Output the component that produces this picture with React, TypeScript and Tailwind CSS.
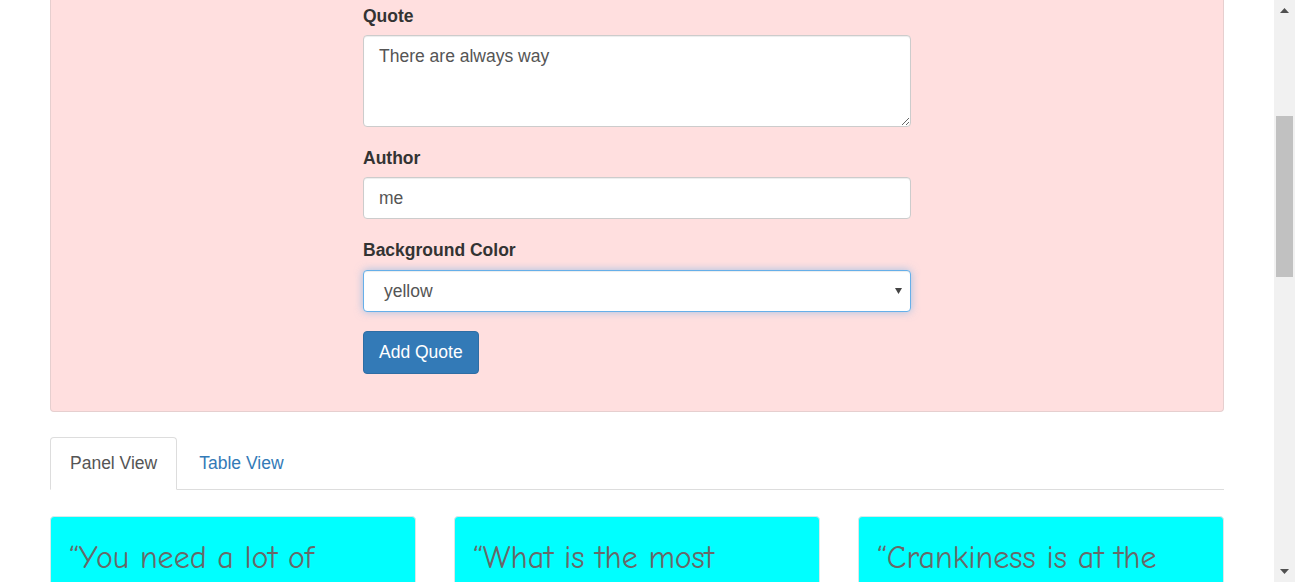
import { useState } from "react";

const quotes = [
  "“You need a lot of",
  "“What is the most",
  "“Crankiness is at the",
];

function Scrollbar() {
  return (
    <div className="flex h-full w-[21px] shrink-0 flex-col items-center bg-[#f1f1f1]">
      <div className="flex h-[21px] w-full items-center justify-center">
        <svg width="9" height="5" viewBox="0 0 9 5">
          <path d="M0 5 L4.5 0 L9 5 Z" fill="#505050" />
        </svg>
      </div>
      <div className="mt-[95px] h-[161px] w-[17px] bg-[#c1c1c1]" />
      <div className="flex-1" />
      <div className="flex h-[21px] w-full items-center justify-center">
        <svg width="9" height="5" viewBox="0 0 9 5">
          <path d="M0 0 L9 0 L4.5 5 Z" fill="#505050" />
        </svg>
      </div>
    </div>
  );
}

export default function App() {
  const [tab, setTab] = useState("panel");

  return (
    <div className="flex h-[582px] w-full overflow-hidden bg-white font-['Liberation_Sans',Arial,sans-serif] text-[17.5px]">
      <div className="min-w-0 flex-1 px-[50px]">
        {/* add quote form */}
        <div className="flex justify-center rounded-b-[4px] border-x border-b border-[#e6cfcf] bg-[#ffdfdf] pb-[37px] pt-[3px]">
          <form className="w-[548px]" onSubmit={(e) => e.preventDefault()}>
            <div className="mb-[18px]">
              <label className="mb-[6px] block leading-[26px] font-bold text-[#333]">Quote</label>
              <textarea
                defaultValue="There are always way"
                className="block h-[92px] w-full rounded-[4px] border border-[#ccc] bg-white px-[15px] py-[8px] leading-[25px] text-[#555] shadow-[inset_0_1px_1px_rgba(0,0,0,0.075)] outline-none"
              />
            </div>
            <div className="mb-[18px]">
              <label className="mb-[6px] block leading-[26px] font-bold text-[#333]">Author</label>
              <input
                defaultValue="me"
                className="block h-[42px] w-full rounded-[4px] border border-[#ccc] bg-white px-[15px] text-[#555] shadow-[inset_0_1px_1px_rgba(0,0,0,0.075)] outline-none"
              />
            </div>
            <div className="mb-[19px]">
              <label className="mb-[7px] block leading-[26px] font-bold text-[#333]">Background Color</label>
              <div className="flex h-[42px] w-full items-center justify-between rounded-[4px] border border-[#66afe9] bg-white pl-[20px] pr-[8px] text-[#555] shadow-[inset_0_1px_1px_rgba(0,0,0,0.075),0_0_8px_rgba(102,175,233,0.6)]">
                <span>yellow</span>
                <svg width="7" height="6" viewBox="0 0 7 6">
                  <path d="M0 0 L7 0 L3.5 6 Z" fill="#444" />
                </svg>
              </div>
            </div>
            <button
              type="submit"
              className="h-[43px] rounded-[4px] border border-[#2e6da4] bg-[#337ab7] px-[15px] text-white"
            >
              Add Quote
            </button>
          </form>
        </div>

        {/* tabs */}
        <ul className="mt-[25px] flex border-b border-[#ddd]">
          <li className="-mb-px">
            <button
              onClick={() => setTab("panel")}
              className={
                tab === "panel"
                  ? "h-[53px] rounded-t-[4px] border border-[#ddd] border-b-white bg-white px-[19px] text-[#555]"
                  : "h-[53px] rounded-t-[4px] border border-transparent px-[19px] text-[#337ab7]"
              }
            >
              Panel View
            </button>
          </li>
          <li className="-mb-px ml-[2px]">
            <button
              onClick={() => setTab("table")}
              className={
                tab === "table"
                  ? "h-[53px] rounded-t-[4px] border border-[#ddd] border-b-white bg-white px-[19px] text-[#555]"
                  : "h-[53px] rounded-t-[4px] border border-transparent px-[19px] text-[#337ab7]"
              }
            >
              Table View
            </button>
          </li>
        </ul>

        {/* quote cards */}
        <div className="mt-[26px] grid grid-cols-3 gap-x-[38px]">
          {quotes.map((q) => (
            <div
              key={q}
              className="h-[120px] rounded-[4px] border border-[#d8e8e8] bg-[#00ffff] px-[18px] pt-[19px]"
            >
              <p className="font-['Comic_Sans_MS','Comic_Neue','DejaVu_Sans_Condensed',cursive] text-[32px] leading-[44px] text-[#686868]">
                {q}
              </p>
            </div>
          ))}
        </div>
      </div>
      <Scrollbar />
    </div>
  );
}
